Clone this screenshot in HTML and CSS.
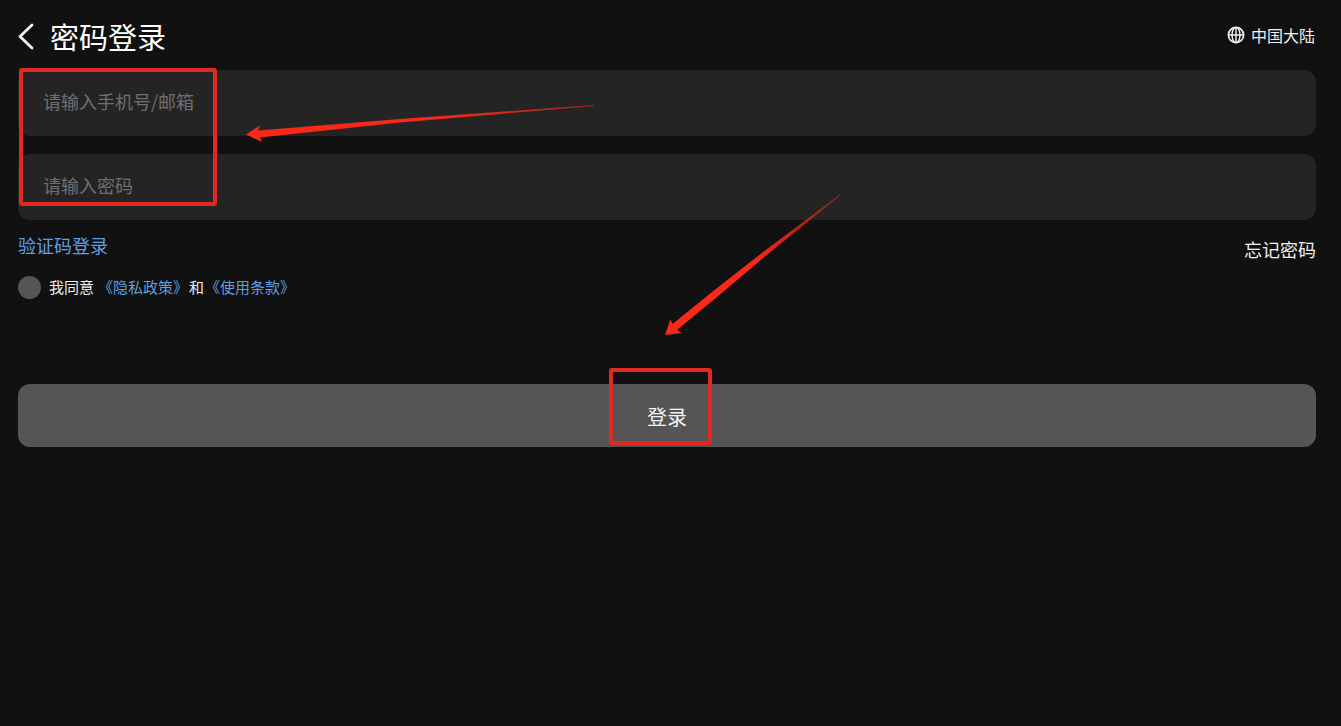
FILE: index.html
```html
<!DOCTYPE html>
<html lang="zh-CN">
<head>
<meta charset="utf-8">
<meta name="viewport" content="width=device-width, initial-scale=1">
<title>密码登录</title>
<link rel="stylesheet" href="styles.css">
</head>
<body>
<main class="page">
  <header class="header">
    <button class="back" type="button" aria-label="返回">
      <svg width="16" height="28" viewBox="0 0 16 28" fill="none" stroke="currentColor" stroke-width="2.8" stroke-linecap="round" stroke-linejoin="round"><path d="M14 2 2 13.500 14 25"/></svg>
    </button>
    <h1 class="title">密码登录</h1>
    <button class="region" type="button">
      <svg width="18" height="18" viewBox="0 0 18 18" fill="none" stroke="currentColor" stroke-width="1.7"><circle cx="9" cy="9" r="7.6"/><ellipse cx="9" cy="9" rx="4" ry="7.6" stroke-width="1.4"/><path d="M9 1.400v15.200M1.400 9h15.200" stroke-width="1.4"/></svg>
      <span>中国大陆</span>
    </button>
  </header>
  <form class="form">
    <input class="field" type="text" aria-label="手机号/邮箱" placeholder="请输入手机号/邮箱">
    <input class="field" type="password" aria-label="密码" placeholder="请输入密码">
    <div class="links">
      <a class="link" href="#">验证码登录</a>
      <a class="forgot" href="#">忘记密码</a>
    </div>
    <div class="agree">
      <input class="check" type="checkbox" id="agree">
      <label class="agree-text" for="agree">我同意</label>
      <span class="agree-text policies"><a class="link" href="#">《隐私政策》</a><span>和</span><a class="link" href="#">《使用条款》</a></span>
    </div>
    <button class="submit" type="submit">登录</button>
  </form>
  <svg class="marks" width="860" height="460" viewBox="0 0 860 460" aria-hidden="true">
    <defs>
      <linearGradient id="fade-a" gradientUnits="userSpaceOnUse" x1="246" y1="135" x2="596" y2="105"><stop offset="0.5" stop-color="#fa2819"/><stop offset="1" stop-color="#fa2819" stop-opacity="0.6"/></linearGradient>
      <linearGradient id="fade-b" gradientUnits="userSpaceOnUse" x1="665" y1="335" x2="840" y2="195"><stop offset="0.5" stop-color="#fa2819"/><stop offset="1" stop-color="#fa2819" stop-opacity="0.5"/></linearGradient>
    </defs>
    <g fill="none" stroke="#e0291f" stroke-width="4" stroke-linejoin="round">
      <rect x="21" y="70" width="194" height="134" rx="1"/>
      <rect x="611" y="370" width="99" height="73" rx="1"/>
    </g>
    <path fill="url(#fade-a)" d="M246 134.500 260 125.500 258 130.500 400 119 594 105 594 106 400 122.500 260 137.500 262 142Z"/>
    <path fill="url(#fade-b)" d="M665 335 670.500 319.500 672.500 324 712 292 765 250.500 840 194.500 840 195.500 768 254 717 297 677 330 682 333Z"/>
  </svg>
</main>
</body>
</html>
```
FILE: styles.css
```css
* {
  box-sizing: border-box;
}

body {
  margin: 0;
  background: #111111;
  color: #f2f2f2;
  font-family: "Noto Sans CJK SC", sans-serif;
}

button {
  padding: 0;
  border: 0;
  background: none;
  color: inherit;
  font-family: inherit;
}

svg {
  display: block;
}

a {
  color: inherit;
  text-decoration: none;
}

.page {
  position: relative;
  min-height: 100vh;
  padding: 4px 25px 24px 18px;
}

.header {
  display: flex;
  align-items: center;
  height: 66px;
}

.title {
  margin: 0 auto 0 16px;
  padding-bottom: 2px;
  color: #ffffff;
  font-size: 29px;
  font-weight: 400;
  line-height: 44px;
}

.region {
  display: flex;
  align-items: center;
  gap: 6px;
  padding: 0 1px 4px 0;
  font-size: 16px;
  line-height: 24px;
}

.form {
  display: flex;
  flex-direction: column;
}

.field {
  width: 100%;
  height: 66px;
  margin-bottom: 18px;
  padding: 0 25px 4px;
  border: 0;
  border-radius: 12px;
  background: #242424;
  color: #f2f2f2;
  font-family: inherit;
  font-size: 18px;
}

.field + .field {
  margin-bottom: 12px;
}

.field::placeholder {
  color: #6f6f6f;
  opacity: 1;
}

.links {
  display: flex;
  align-items: flex-end;
  justify-content: space-between;
  font-size: 18px;
  line-height: 26px;
}

.links .link {
  padding-bottom: 4px;
}

.link {
  color: #609ee2;
}

.agree {
  display: flex;
  align-items: center;
  margin-top: 13px;
  font-size: 15px;
  line-height: 24px;
}

.check {
  appearance: none;
  width: 23px;
  height: 23px;
  margin: 0 8px 0 0;
  border-radius: 50%;
  background: #555555;
}

.agree-text + .agree-text {
  margin-left: 4px;
}

.policies {
  display: flex;
  gap: 1px;
}

.submit {
  height: 63px;
  margin-top: 85px;
  padding-top: 2px;
  border-radius: 12px;
  background: #555555;
  font-size: 20px;
}

.marks {
  position: absolute;
  top: 0;
  left: 0;
  pointer-events: none;
}
```
